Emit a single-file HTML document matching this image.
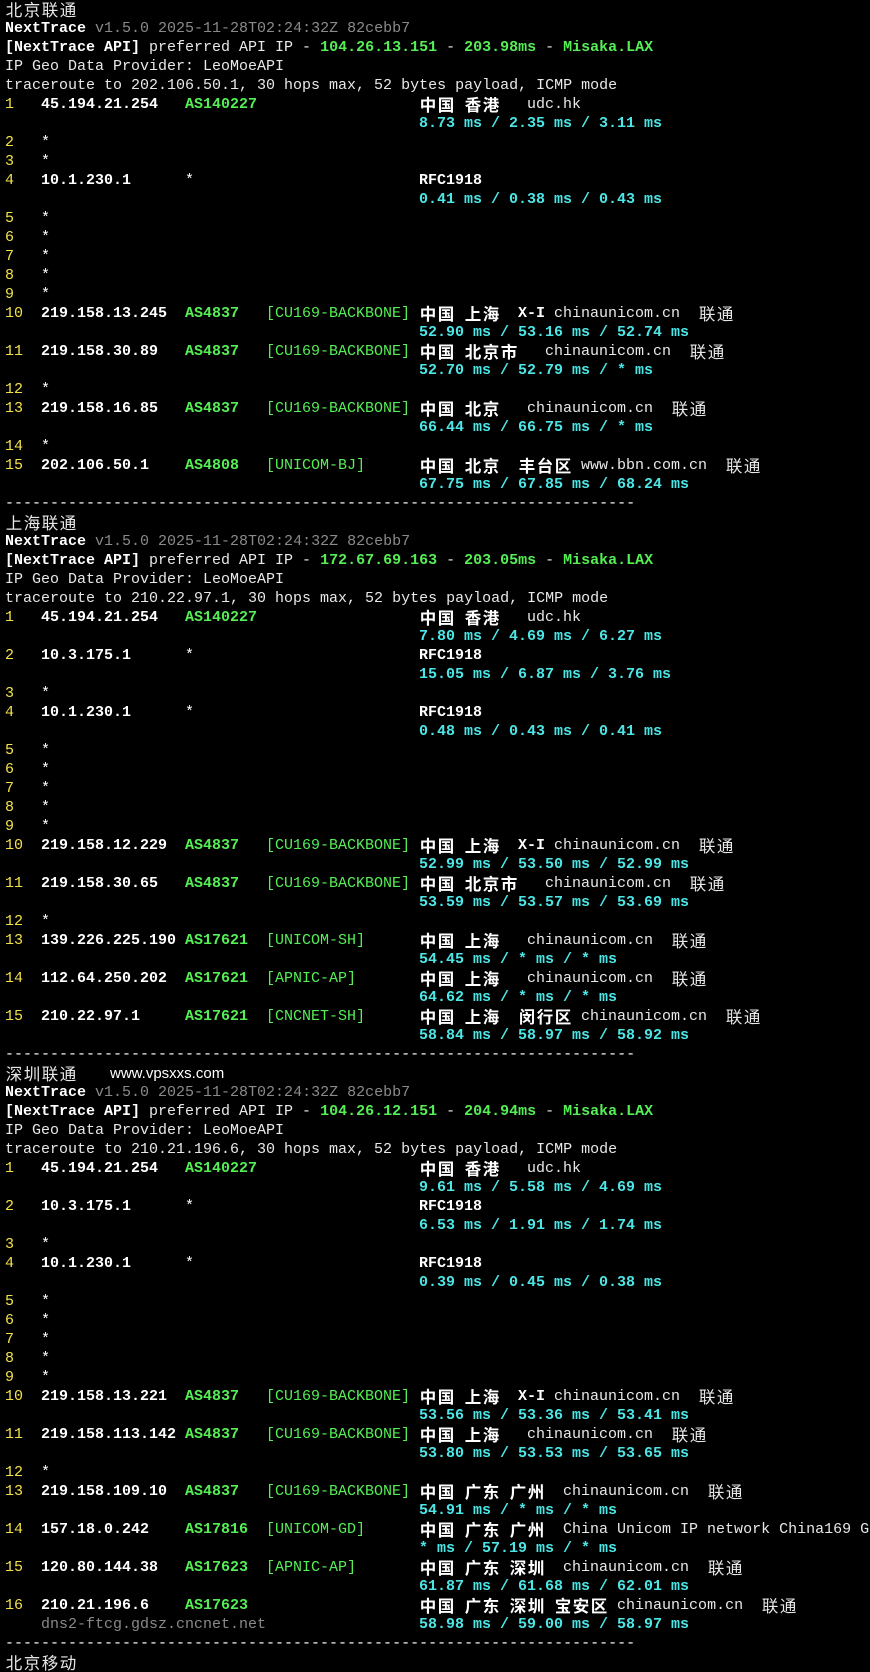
<!DOCTYPE html>
<html><head><meta charset="utf-8">
<style>
html,body{margin:0;padding:0;background:#000;}
body{width:870px;height:1663px;overflow:hidden;position:relative;font-family:"Liberation Mono","Noto Sans CJK SC",monospace;font-size:15px;color:#e8e8e8;}
.l{position:absolute;left:0;height:19px;line-height:19px;white-space:pre;width:870px;overflow:hidden;}
.s{position:absolute;top:0;white-space:pre;}
.c{display:inline-block;width:18px;text-align:center;font-family:"Noto Sans CJK SC","WenQuanYi Zen Hei",sans-serif;font-size:16.5px;line-height:19px;vertical-align:top;}
.b{font-weight:bold;}
.y{color:#f2e24a;}
.g{color:#55ee55;}
.cy{color:#4de6e6;font-weight:bold;}
.gr{color:#8a8a8a;}
.w{color:#ffffff;}
.sans{font-family:"Liberation Sans",sans-serif;font-size:15px;}
</style></head><body>
<div id="root"></div>
<script>
var CW=9.0,X0=5,LH=19;
var out=[],row=0;
function cj(t){return t.replace(/[\u4e00-\u9fff]/g,function(m){return '<span class="c">'+m+'</span>';});}
function seg(col,txt,cls){return '<span class="s '+(cls||'')+'" style="left:'+(X0+col*CW)+'px">'+cj(txt)+'</span>';}
function line(html){out.push('<div class="l" style="top:'+(row*LH)+'px">'+html+'</div>');row++;}
function header(title,ip,ms,target,extra){
 line(seg(0,title,'')+(extra?'<span class="s sans w" style="left:110px">'+extra+'</span>':''));
 line('<span class="s" style="left:5px"><span class="b w">NextTrace</span> <span class="gr">v1.5.0 2025-11-28T02:24:32Z 82cebb7</span></span>');
 line('<span class="s" style="left:5px"><span class="b w">[NextTrace API]</span> preferred API IP - <span class="g b">'+ip+'</span> - <span class="g b">'+ms+'</span> - <span class="g b">Misaka.LAX</span></span>');
 line(seg(0,'IP Geo Data Provider: LeoMoeAPI',''));
 line(seg(0,'traceroute to '+target+', 30 hops max, 52 bytes payload, ICMP mode',''));
}
function star(n){line(seg(0,String(n),'y')+seg(4,'*','w'));}
function hop(n,ip,as,tag,geoB,geoN,ms,sub){
 var h=seg(0,String(n),'y')+seg(4,ip,'b w');
 if(as==='*')h+=seg(20,'*','w');else if(as)h+=seg(20,as,'b g');
 if(tag)h+=seg(29,tag,'g');
 h+='<span class="s" style="left:'+(X0+46*CW)+'px"><span class="b w">'+cj(geoB)+'</span>'+cj(geoN)+'</span>';
 line(h);
 line((sub?seg(4,sub,'gr'):'')+seg(46,ms,'cy'));
}
function sep(){line(seg(0,new Array(71).join('-'),'w'));}
var BB='[CU169-BACKBONE]';
header('北京联通','104.26.13.151','203.98ms','202.106.50.1');
hop(1,'45.194.21.254','AS140227','','中国 香港','   udc.hk','8.73 ms / 2.35 ms / 3.11 ms');
star(2);star(3);
hop(4,'10.1.230.1','*','','RFC1918','','0.41 ms / 0.38 ms / 0.43 ms');
star(5);star(6);star(7);star(8);star(9);
hop(10,'219.158.13.245','AS4837',BB,'中国 上海  X-I',' chinaunicom.cn  联通','52.90 ms / 53.16 ms / 52.74 ms');
hop(11,'219.158.30.89','AS4837',BB,'中国 北京市','   chinaunicom.cn  联通','52.70 ms / 52.79 ms / * ms');
star(12);
hop(13,'219.158.16.85','AS4837',BB,'中国 北京','   chinaunicom.cn  联通','66.44 ms / 66.75 ms / * ms');
star(14);
hop(15,'202.106.50.1','AS4808','[UNICOM-BJ]','中国 北京  丰台区',' www.bbn.com.cn  联通','67.75 ms / 67.85 ms / 68.24 ms');
sep();
header('上海联通','172.67.69.163','203.05ms','210.22.97.1');
hop(1,'45.194.21.254','AS140227','','中国 香港','   udc.hk','7.80 ms / 4.69 ms / 6.27 ms');
hop(2,'10.3.175.1','*','','RFC1918','','15.05 ms / 6.87 ms / 3.76 ms');
star(3);
hop(4,'10.1.230.1','*','','RFC1918','','0.48 ms / 0.43 ms / 0.41 ms');
star(5);star(6);star(7);star(8);star(9);
hop(10,'219.158.12.229','AS4837',BB,'中国 上海  X-I',' chinaunicom.cn  联通','52.99 ms / 53.50 ms / 52.99 ms');
hop(11,'219.158.30.65','AS4837',BB,'中国 北京市','   chinaunicom.cn  联通','53.59 ms / 53.57 ms / 53.69 ms');
star(12);
hop(13,'139.226.225.190','AS17621','[UNICOM-SH]','中国 上海','   chinaunicom.cn  联通','54.45 ms / * ms / * ms');
hop(14,'112.64.250.202','AS17621','[APNIC-AP]','中国 上海','   chinaunicom.cn  联通','64.62 ms / * ms / * ms');
hop(15,'210.22.97.1','AS17621','[CNCNET-SH]','中国 上海  闵行区',' chinaunicom.cn  联通','58.84 ms / 58.97 ms / 58.92 ms');
sep();
header('深圳联通','104.26.12.151','204.94ms','210.21.196.6','www.vpsxxs.com');
hop(1,'45.194.21.254','AS140227','','中国 香港','   udc.hk','9.61 ms / 5.58 ms / 4.69 ms');
hop(2,'10.3.175.1','*','','RFC1918','','6.53 ms / 1.91 ms / 1.74 ms');
star(3);
hop(4,'10.1.230.1','*','','RFC1918','','0.39 ms / 0.45 ms / 0.38 ms');
star(5);star(6);star(7);star(8);star(9);
hop(10,'219.158.13.221','AS4837',BB,'中国 上海  X-I',' chinaunicom.cn  联通','53.56 ms / 53.36 ms / 53.41 ms');
hop(11,'219.158.113.142','AS4837',BB,'中国 上海','   chinaunicom.cn  联通','53.80 ms / 53.53 ms / 53.65 ms');
star(12);
hop(13,'219.158.109.10','AS4837',BB,'中国 广东 广州','  chinaunicom.cn  联通','54.91 ms / * ms / * ms');
hop(14,'157.18.0.242','AS17816','[UNICOM-GD]','中国 广东 广州','  China Unicom IP network China169 Guangdong','* ms / 57.19 ms / * ms');
hop(15,'120.80.144.38','AS17623','[APNIC-AP]','中国 广东 深圳','  chinaunicom.cn  联通','61.87 ms / 61.68 ms / 62.01 ms');
hop(16,'210.21.196.6','AS17623','','中国 广东 深圳 宝安区',' chinaunicom.cn  联通','58.98 ms / 59.00 ms / 58.97 ms','dns2-ftcg.gdsz.cncnet.net');
sep();
line(seg(0,'北京移动',''));
document.getElementById('root').innerHTML=out.join('');
</script>
</body></html>
